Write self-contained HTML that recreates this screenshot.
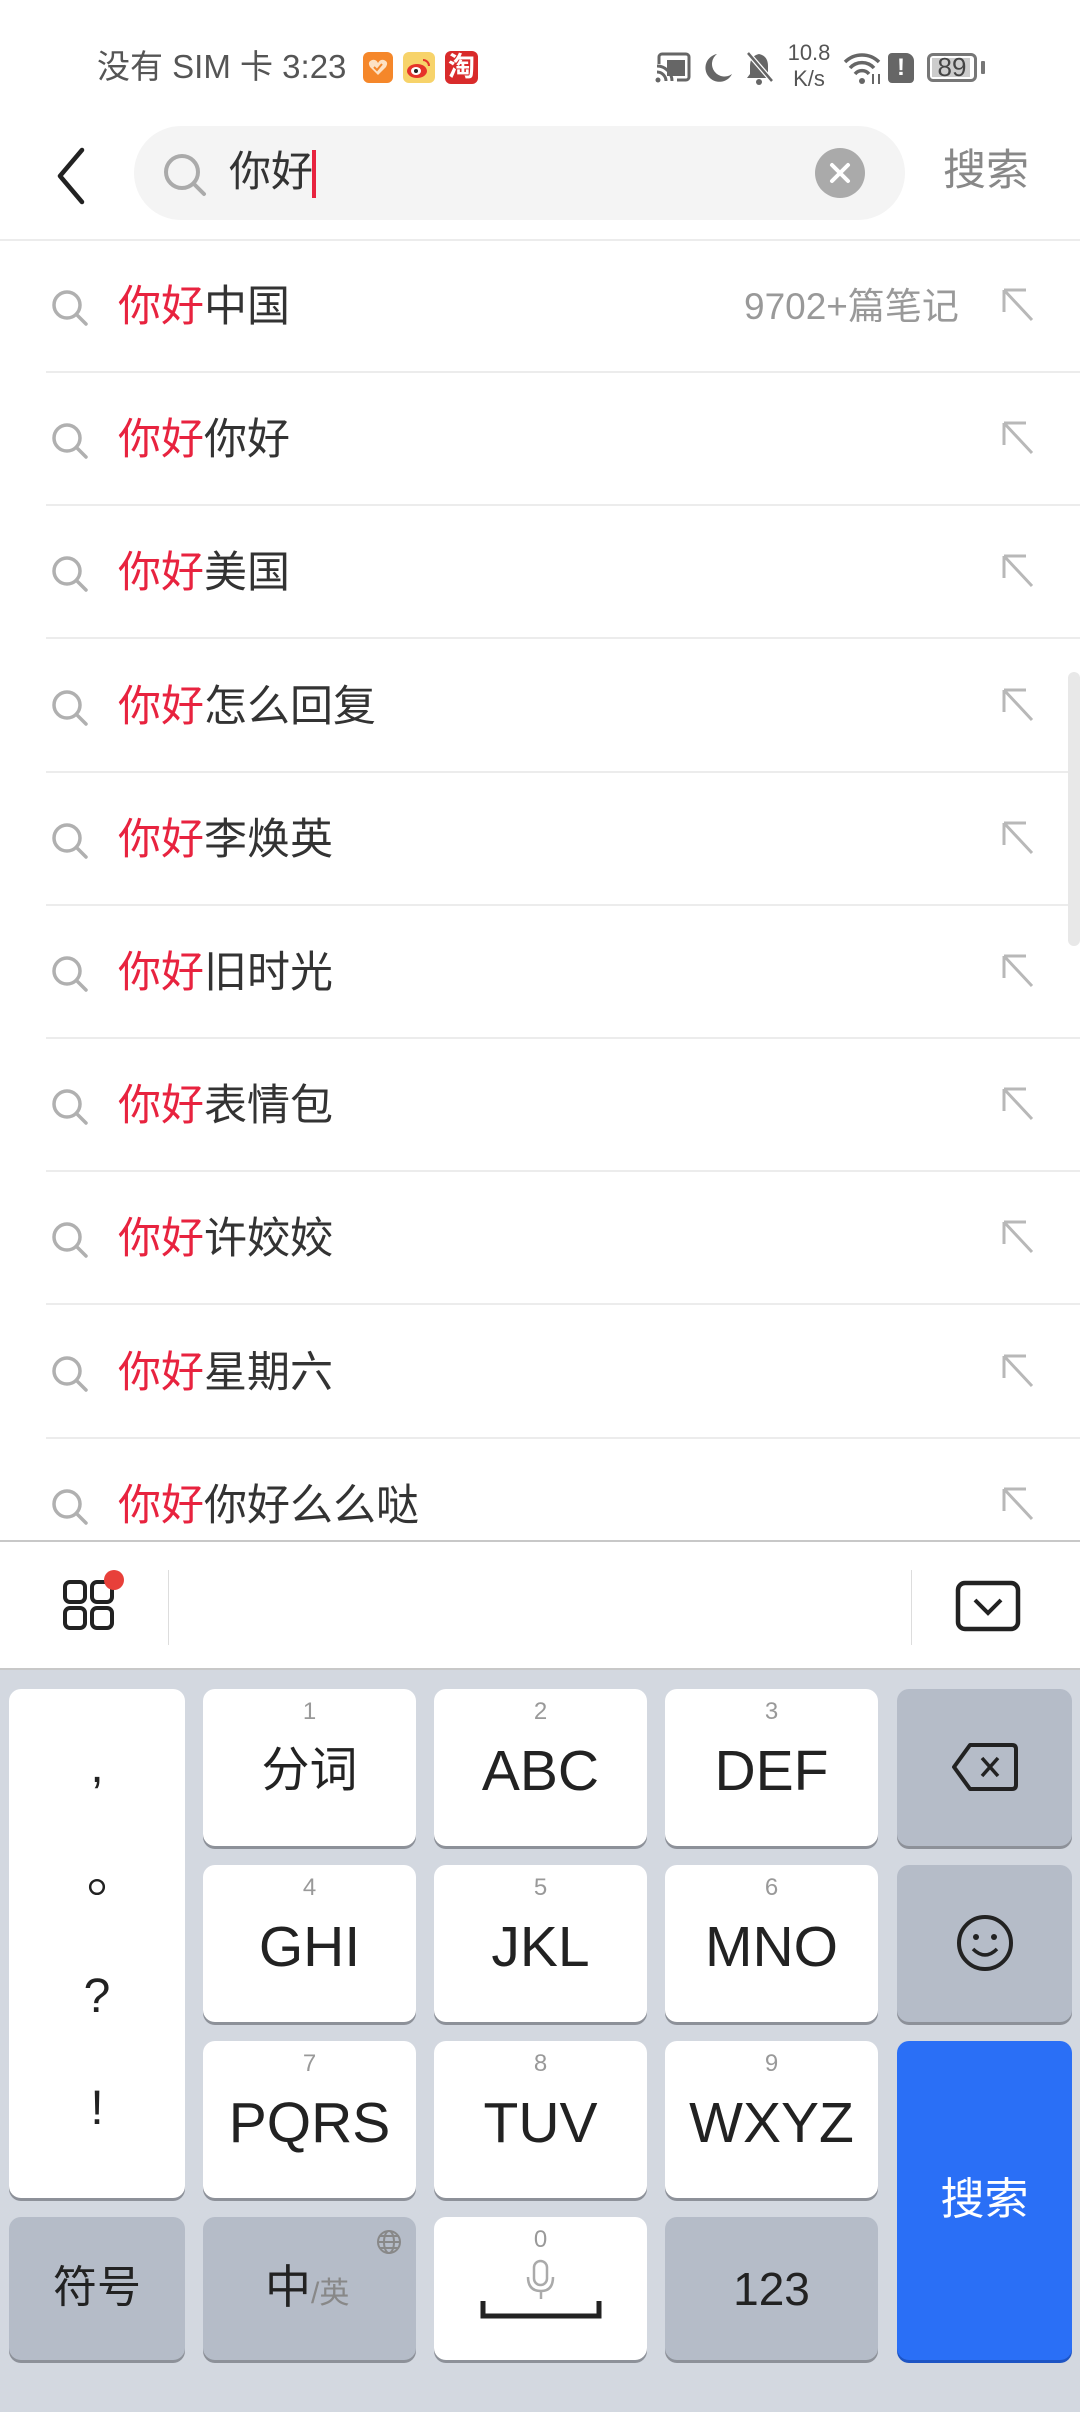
<!DOCTYPE html>
<html><head><meta charset="utf-8">
<style>
*{margin:0;padding:0;box-sizing:border-box}
body{width:1080px;height:2412px;background:#fff;position:relative;overflow:hidden;font-family:"Liberation Sans","Noto Sans CJK SC",sans-serif}
.a{position:absolute}
.row{position:absolute;left:0;width:1080px;height:133px}
.row .t{position:absolute;left:118px;top:44px;font-size:43px;line-height:46px;color:#333;white-space:nowrap}
.row .t b{font-weight:normal;color:#e8233f}
.row .q{position:absolute;left:50px;top:48px}
.row .ar{position:absolute;left:998px;top:46px}
.row .ln{position:absolute;left:46px;right:0;bottom:0;height:2px;background:#ececec}
.key{position:absolute;border-radius:12px;background:#fff;box-shadow:0 3px 0 #8d9199;text-align:center;color:#222}
.g{background:#b5bcc8}
.num{position:absolute;left:0;right:0;top:10px;font-size:24px;color:#999;line-height:26px}
.lab{position:absolute;left:0;right:0;top:50px;font-size:57px;line-height:64px}
</style></head><body>
<svg width="0" height="0" style="position:absolute"><defs>
<g id="q"><circle cx="17" cy="17" r="13" stroke="#b0b0b0" stroke-width="3.5" fill="none"/><path d="M27 27L36 36" stroke="#b0b0b0" stroke-width="3.5" stroke-linecap="round"/></g>
<g id="ar"><path d="M6 4L34 34M6 4L6 26M6 4L28 4" stroke="#b8b8b8" stroke-width="3" fill="none"/></g>
</defs></svg>
<!-- status bar -->
<div class="a" style="left:97px;top:47px;font-size:33px;line-height:40px;color:#555">没有 SIM 卡 3:23</div>
<div class="a" style="left:363px;top:52px;width:30px;height:31px;border-radius:6px;background:#f5872a"><svg width="30" height="31"><path d="M15 23 L7 15 Q4 10 9 8 Q13 7 15 11 Q17 7 21 8 Q26 10 23 15Z" fill="#fde2c4"/><path d="M11 15 l3 3 l5 -6" stroke="#f5872a" stroke-width="2" fill="none"/></svg></div>
<div class="a" style="left:403px;top:52px;width:32px;height:31px;border-radius:6px;background:#f7d36a"><svg width="32" height="31"><ellipse cx="14" cy="19" rx="10" ry="7" fill="#e6332a"/><ellipse cx="13" cy="19" rx="5" ry="4" fill="#fff"/><circle cx="13" cy="19" r="2" fill="#222"/><path d="M20 8 a6 6 0 0 1 6 6" stroke="#e6332a" stroke-width="2" fill="none"/></svg></div>
<div class="a" style="left:445px;top:51px;width:33px;height:33px;border-radius:6px;background:#d92b2b;color:#fff;font-size:27px;line-height:33px;text-align:center;font-weight:bold">淘</div>
<svg class="a" style="left:655px;top:52px" width="36" height="31"><rect x="4" y="2" width="30" height="26" rx="3" fill="none" stroke="#666" stroke-width="3"/><rect x="0" y="12" width="22" height="19" fill="#fff"/><rect x="12" y="8" width="18" height="16" fill="#666"/><path d="M2 14a15 15 0 0 1 15 15M2 20a9 9 0 0 1 9 9" stroke="#666" stroke-width="3" fill="none"/><circle cx="3" cy="28" r="2.5" fill="#666"/></svg>
<svg class="a" style="left:703px;top:52px" width="30" height="31"><path d="M14 2 A14 14 0 1 0 29 22 A12 12 0 0 1 14 2Z" fill="#666"/></svg>
<svg class="a" style="left:745px;top:50px" width="30" height="36"><path d="M14 4 Q5 6 5 16 L5 24 L2 28 L26 28 L23 24 L23 16 Q23 6 14 4Z" fill="#666"/><circle cx="14" cy="32" r="3" fill="#666"/><path d="M2 2 L28 32" stroke="#fff" stroke-width="5"/><path d="M3 3 L27 31" stroke="#666" stroke-width="2.5"/></svg>
<div class="a" style="left:782px;top:40px;width:54px;font-size:22px;line-height:26px;color:#555;text-align:center">10.8<br>K/s</div>
<svg class="a" style="left:843px;top:50px" width="42" height="36"><path d="M2 12a24 24 0 0 1 34 0M7 18a16 16 0 0 1 24 0M12 24a9 9 0 0 1 14 0" stroke="#666" stroke-width="3.5" fill="none"/><circle cx="19" cy="31" r="3" fill="#666"/><path d="M30 24v10M36 24v10" stroke="#666" stroke-width="2"/></svg>
<div class="a" style="left:888px;top:53px;width:26px;height:30px;border-radius:4px 8px 4px 4px;background:#666;color:#fff;font-size:24px;line-height:30px;text-align:center;font-weight:bold">!</div>
<div class="a" style="left:927px;top:53px;width:50px;height:29px;border:3px solid #777;border-radius:6px"><div style="position:absolute;left:2px;top:2px;width:38px;height:19px;background:#ccc"></div><div style="position:absolute;left:0;right:0;top:-3px;font-size:26px;line-height:29px;color:#444;text-align:center">89</div></div>
<div class="a" style="left:981px;top:61px;width:4px;height:13px;background:#777;border-radius:1px"></div>

<!-- search header -->
<svg class="a" style="left:52px;top:146px" width="36" height="60"><path d="M30 4 L8 30 L30 56" stroke="#222" stroke-width="4.5" fill="none" stroke-linecap="round" stroke-linejoin="round"/></svg>
<div class="a" style="left:134px;top:126px;width:771px;height:94px;border-radius:47px;background:#f4f4f4"></div>
<svg class="a" style="left:162px;top:152px" width="48" height="48"><circle cx="20" cy="20" r="16" stroke="#aaa" stroke-width="4" fill="none"/><path d="M32 32 L42 42" stroke="#aaa" stroke-width="4" stroke-linecap="round"/></svg>
<div class="a" style="left:229px;top:147px;font-size:42px;line-height:50px;color:#333">你好</div>
<div class="a" style="left:312px;top:150px;width:4px;height:48px;background:#e8233f"></div>
<div class="a" style="left:815px;top:148px;width:50px;height:50px;border-radius:50%;background:#aaa"><svg width="50" height="50"><path d="M17 17L33 33M33 17L17 33" stroke="#fff" stroke-width="4" stroke-linecap="round"/></svg></div>
<div class="a" style="left:943px;top:146px;font-size:43px;line-height:50px;color:#888">搜索</div>
<div class="a" style="left:0;top:239px;width:1080px;height:2px;background:#ececec"></div>

<!-- rows -->
<div class="row" style="top:240px"><svg class="q" width="40" height="40"><use href="#q"/></svg><div class="t"><b>你好</b>中国</div><div class="a" style="left:744px;top:44px;font-size:37px;line-height:46px;color:#999">9702+篇笔记</div><svg class="ar" width="40" height="40"><use href="#ar"/></svg><div class="ln"></div></div>
<div class="row" style="top:373px"><svg class="q" width="40" height="40"><use href="#q"/></svg><div class="t"><b>你好</b>你好</div><svg class="ar" width="40" height="40"><use href="#ar"/></svg><div class="ln"></div></div>
<div class="row" style="top:506px"><svg class="q" width="40" height="40"><use href="#q"/></svg><div class="t"><b>你好</b>美国</div><svg class="ar" width="40" height="40"><use href="#ar"/></svg><div class="ln"></div></div>
<div class="row" style="top:640px"><svg class="q" width="40" height="40"><use href="#q"/></svg><div class="t"><b>你好</b>怎么回复</div><svg class="ar" width="40" height="40"><use href="#ar"/></svg><div class="ln"></div></div>
<div class="row" style="top:773px"><svg class="q" width="40" height="40"><use href="#q"/></svg><div class="t"><b>你好</b>李焕英</div><svg class="ar" width="40" height="40"><use href="#ar"/></svg><div class="ln"></div></div>
<div class="row" style="top:906px"><svg class="q" width="40" height="40"><use href="#q"/></svg><div class="t"><b>你好</b>旧时光</div><svg class="ar" width="40" height="40"><use href="#ar"/></svg><div class="ln"></div></div>
<div class="row" style="top:1039px"><svg class="q" width="40" height="40"><use href="#q"/></svg><div class="t"><b>你好</b>表情包</div><svg class="ar" width="40" height="40"><use href="#ar"/></svg><div class="ln"></div></div>
<div class="row" style="top:1172px"><svg class="q" width="40" height="40"><use href="#q"/></svg><div class="t"><b>你好</b>许姣姣</div><svg class="ar" width="40" height="40"><use href="#ar"/></svg><div class="ln"></div></div>
<div class="row" style="top:1306px"><svg class="q" width="40" height="40"><use href="#q"/></svg><div class="t"><b>你好</b>星期六</div><svg class="ar" width="40" height="40"><use href="#ar"/></svg><div class="ln"></div></div>
<div class="row" style="top:1439px"><svg class="q" width="40" height="40"><use href="#q"/></svg><div class="t"><b>你好</b>你好么么哒</div><svg class="ar" width="40" height="40"><use href="#ar"/></svg></div>
<div class="a" style="left:1068px;top:672px;width:12px;height:274px;border-radius:6px;background:#e8e8e8"></div>

<!-- toolbar -->
<div class="a" style="left:0;top:1540px;width:1080px;height:130px;background:#fff;border-top:2px solid #c8c8c8;border-bottom:2px solid #c8c8c8"></div>
<svg class="a" style="left:62px;top:1568px" width="64" height="66"><rect x="3" y="14" width="20" height="20" rx="5" stroke="#222" stroke-width="4" fill="none"/><rect x="30" y="14" width="20" height="20" rx="5" stroke="#222" stroke-width="4" fill="none"/><rect x="3" y="40" width="20" height="20" rx="5" stroke="#222" stroke-width="4" fill="none"/><rect x="30" y="40" width="20" height="20" rx="5" stroke="#222" stroke-width="4" fill="none"/><circle cx="52" cy="12" r="10" fill="#e8403a"/></svg>
<div class="a" style="left:168px;top:1570px;width:1px;height:75px;background:#ddd"></div>
<div class="a" style="left:911px;top:1570px;width:1px;height:75px;background:#ddd"></div>
<svg class="a" style="left:955px;top:1580px" width="66" height="52"><rect x="3" y="3" width="60" height="46" rx="7" stroke="#222" stroke-width="4.5" fill="none"/><path d="M20 20L33 33L46 20" stroke="#222" stroke-width="4" fill="none"/></svg>

<!-- keyboard -->
<div class="a" style="left:0;top:1670px;width:1080px;height:742px;background:#d3d8e0"></div>
<div class="key" style="left:9px;top:1689px;width:176px;height:509px">
 <div class="a" style="left:0;right:0;top:50px;font-size:48px">,</div>
 <div class="a" style="left:75px;top:185px;width:26px;height:26px;border:4px solid #222;border-radius:50%;transform:scale(0.62)"></div>
 <div class="a" style="left:0;right:0;top:280px;font-size:48px">?</div>
 <div class="a" style="left:0;right:0;top:392px;font-size:48px">!</div>
</div>
<div class="key" style="left:203px;top:1689px;width:213px;height:157px"><div class="num">1</div><div class="lab" style="font-size:48px">分词</div></div>
<div class="key" style="left:434px;top:1689px;width:213px;height:157px"><div class="num">2</div><div class="lab">ABC</div></div>
<div class="key" style="left:665px;top:1689px;width:213px;height:157px"><div class="num">3</div><div class="lab">DEF</div></div>
<div class="key g" style="left:897px;top:1689px;width:175px;height:157px"><svg style="margin-top:52px" width="70" height="52"><path d="M20 4H62Q66 4 66 8V44Q66 48 62 48H20L4 26Z" stroke="#222" stroke-width="4" fill="none" stroke-linejoin="round"/><path d="M32 17L48 35M48 17L32 35" stroke="#222" stroke-width="3.5"/></svg></div>
<div class="key" style="left:203px;top:1865px;width:213px;height:157px"><div class="num">4</div><div class="lab">GHI</div></div>
<div class="key" style="left:434px;top:1865px;width:213px;height:157px"><div class="num">5</div><div class="lab">JKL</div></div>
<div class="key" style="left:665px;top:1865px;width:213px;height:157px"><div class="num">6</div><div class="lab">MNO</div></div>
<div class="key g" style="left:897px;top:1865px;width:175px;height:157px"><svg style="margin-top:48px" width="60" height="60"><circle cx="30" cy="30" r="26" stroke="#222" stroke-width="4" fill="none"/><circle cx="21" cy="24" r="3" fill="#222"/><circle cx="39" cy="24" r="3" fill="#222"/><path d="M18 36Q30 48 42 36" stroke="#222" stroke-width="3.5" fill="none"/></svg></div>
<div class="key" style="left:203px;top:2041px;width:213px;height:157px"><div class="num">7</div><div class="lab">PQRS</div></div>
<div class="key" style="left:434px;top:2041px;width:213px;height:157px"><div class="num">8</div><div class="lab">TUV</div></div>
<div class="key" style="left:665px;top:2041px;width:213px;height:157px"><div class="num">9</div><div class="lab">WXYZ</div></div>
<div class="key" style="left:897px;top:2041px;width:175px;height:319px;background:#2a6ff6;box-shadow:0 3px 0 #1d54c4"><div class="a" style="left:0;right:0;top:132px;font-size:44px;line-height:54px;color:#fff">搜索</div></div>
<div class="key g" style="left:9px;top:2217px;width:176px;height:143px"><div class="a" style="left:0;right:0;top:44px;font-size:44px;line-height:54px">符号</div></div>
<div class="key g" style="left:203px;top:2217px;width:213px;height:143px"><div class="a" style="left:62px;top:42px;font-size:46px;line-height:56px">中<span style="font-size:30px;color:#888">/英</span></div><svg class="a" style="left:173px;top:12px" width="26" height="26"><circle cx="13" cy="13" r="11" stroke="#888" stroke-width="2" fill="none"/><ellipse cx="13" cy="13" rx="5" ry="11" stroke="#888" stroke-width="2" fill="none"/><path d="M2 13H24M4 7H22M4 19H22" stroke="#888" stroke-width="2"/></svg></div>
<div class="key" style="left:434px;top:2217px;width:213px;height:143px"><div class="num">0</div><svg class="a" style="left:91px;top:42px" width="32" height="40"><rect x="9" y="2" width="13" height="24" rx="6.5" stroke="#aaa" stroke-width="2.5" fill="none"/><path d="M3 18Q3 32 16 32Q28 32 28 18M16 32V40" stroke="#aaa" stroke-width="2.5" fill="none"/></svg><svg class="a" style="left:46px;top:84px" width="122" height="20"><path d="M3 0V15H119V0" stroke="#222" stroke-width="5" fill="none"/></svg></div>
<div class="key g" style="left:665px;top:2217px;width:213px;height:143px"><div class="a" style="left:0;right:0;top:44px;font-size:46px;line-height:56px">123</div></div>
</body></html>
